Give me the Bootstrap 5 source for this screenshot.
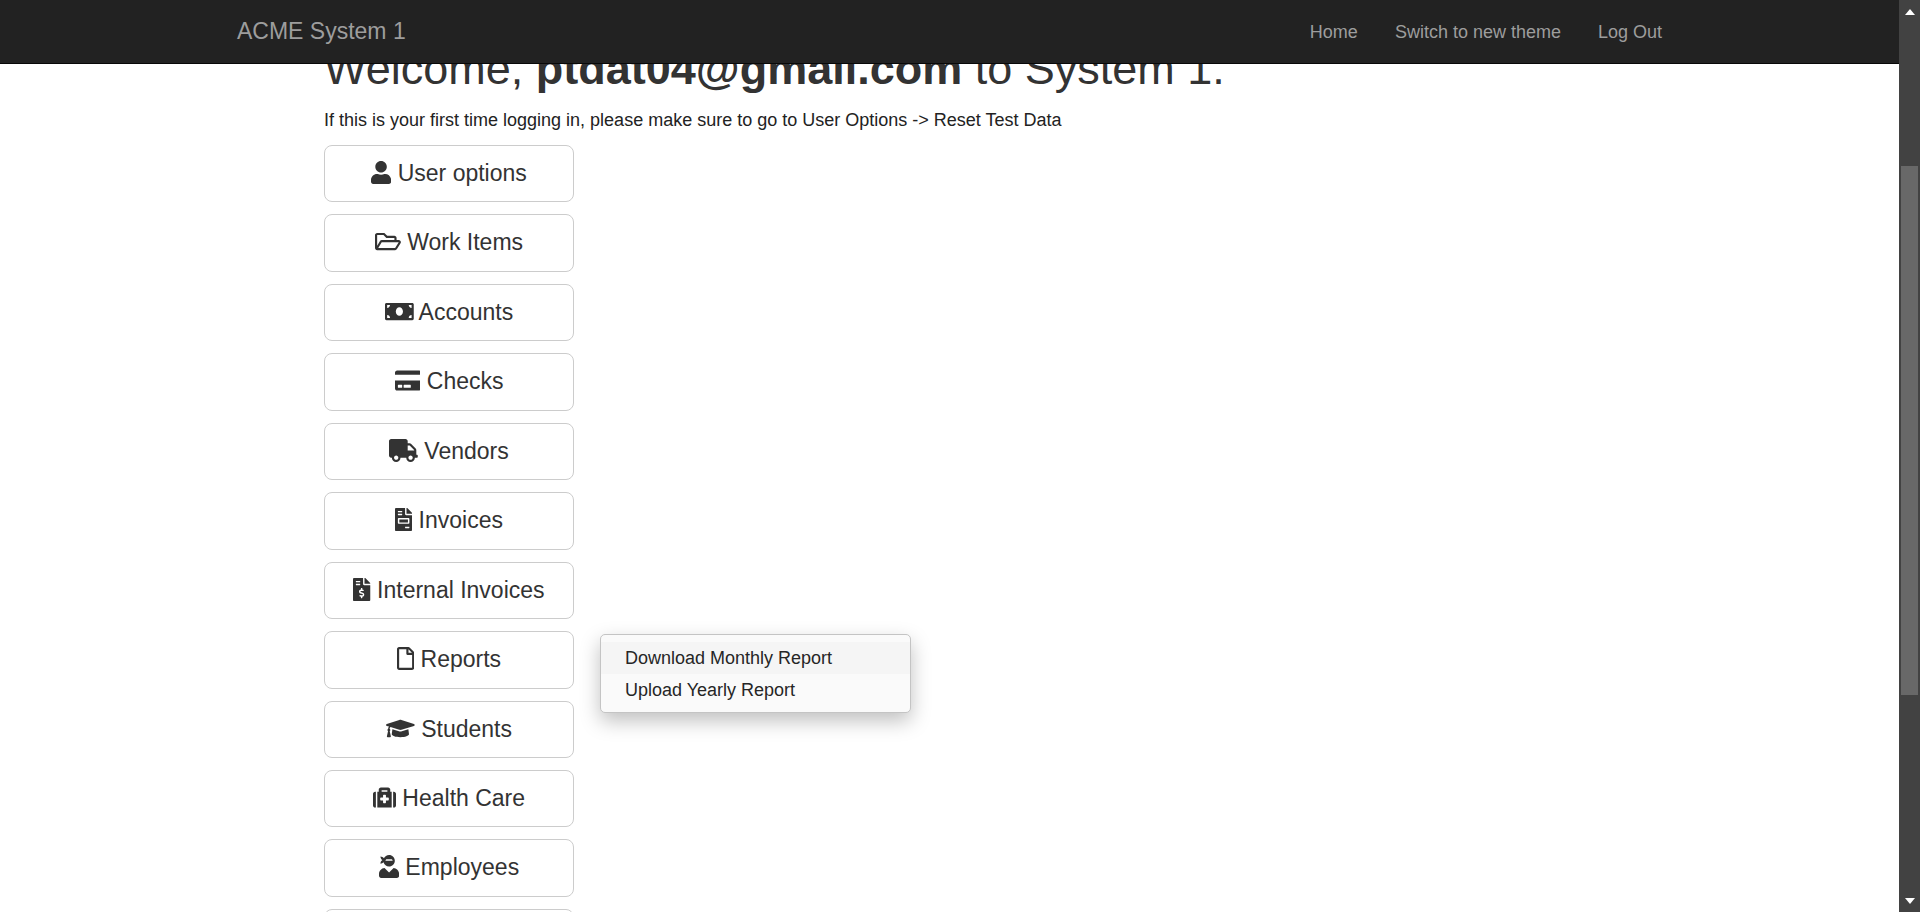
<!DOCTYPE html>
<html lang="en">
<head>
<meta charset="utf-8">
<meta name="viewport" content="width=device-width, initial-scale=1">
<title>ACME System 1</title>
<link href="https://cdn.jsdelivr.net/npm/bootstrap@5.3.0/dist/css/bootstrap.min.css" rel="stylesheet">
<style>
  :root { --bar-width: 21px; }
  body {
    font-family: "Liberation Sans", Arial, sans-serif;
    font-size: 18px;
    line-height: 26px;
    color: #333;
  }
  .viewport { padding-right: var(--bar-width); }
  .page-width { max-width: 1463px; padding-left: 19px; padding-right: 19px; }

  /* Top bar */
  .top-bar {
    right: var(--bar-width);
    min-height: 64px;
    padding: 0;
    background: #222;
    border-bottom: 1px solid #080808;
  }
  .top-bar .navbar-brand { color: #9d9d9d; font-size: 23px; line-height: 26px; padding: 0 0 2px; }
  .top-bar .nav-link { color: #9d9d9d; padding: 0; }
  .top-links { gap: 37px; }

  /* Dashboard */
  .dashboard { padding-top: 44px; }
  .dashboard-body { padding-left: 87px; }
  .welcome { font-size: 45px; line-height: 50px; margin-bottom: 13px; color: #333; }
  .hint { margin-bottom: 12px; color: #222; }
  .tiles { gap: 12px; }
  .tile-item { width: 250px; }
  .tile {
    --bs-btn-padding-y: 13px;
    --bs-btn-padding-x: 0;
    --bs-btn-font-size: 23px;
    --bs-btn-line-height: 1.28;
    --bs-btn-color: #333;
    --bs-btn-bg: #fff;
    --bs-btn-border-color: #ccc;
    --bs-btn-border-radius: 8px;
    --bs-btn-hover-color: #333;
    --bs-btn-hover-bg: #e6e6e6;
    --bs-btn-hover-border-color: #adadad;
  }
  .tile svg { height: 23px; width: auto; fill: currentColor; vertical-align: -3px; }

  .report-menu {
    left: 276px;
    top: 3px;
    width: 311px;
    padding: 7px 0 6px;
    font-size: 18px;
    background: #fafafa;
    border: 1px solid #c4c4c4;
    border-radius: 5px;
    box-shadow: 0 8px 20px rgba(0, 0, 0, .25);
  }
  .report-menu .dropdown-item { padding: 3px 24px; line-height: 26px; color: #262626; }
  .report-menu .dropdown-item.current { background: #f5f5f5; }

  /* Window scroll bar */
  .scroll-track { width: var(--bar-width); background: #424242; z-index: 1040; padding: 9px 2px 8px; }
  .scroll-track svg { width: 10px; height: 6px; fill: #fff; }
  .scroll-space { flex: 151 0 0; }
  .scroll-thumb { flex: 529 0 0; background: #686868; }
  .scroll-rest { flex: 203 0 0; }
</style>
</head>
<body class="vh-100 overflow-hidden">
<nav class="navbar fixed-top top-bar">
  <div class="container-fluid page-width">
    <a class="navbar-brand" href="#">ACME System 1</a>
    <ul class="navbar-nav flex-row top-links">
      <li class="nav-item"><a class="nav-link" href="#">Home</a></li>
      <li class="nav-item"><a class="nav-link" href="#">Switch to new theme</a></li>
      <li class="nav-item"><a class="nav-link" href="#">Log Out</a></li>
    </ul>
  </div>
</nav>

<div class="viewport vh-100 overflow-hidden">
  <main class="container-fluid page-width dashboard">
    <div class="dashboard-body">
      <h1 class="welcome fw-normal">Welcome, <b class="fw-bold">ptdat04@gmail.com</b> to System 1.</h1>
      <p class="hint">If this is your first time logging in, please make sure to go to User Options -&gt; Reset Test Data</p>
      <div class="tiles d-flex flex-column">
        <div class="tile-item"><button type="button" class="btn tile w-100"><svg viewBox="0 0 448 512" aria-hidden="true"><path d="M224 256c70.7 0 128-57.3 128-128S294.7 0 224 0 96 57.3 96 128s57.3 128 128 128zm89.6 32h-16.7c-22.2 10.2-46.9 16-72.9 16s-50.6-5.8-72.9-16h-16.7C60.2 288 0 348.2 0 422.4V464c0 26.5 21.5 48 48 48h352c26.5 0 48-21.5 48-48v-41.6c0-74.2-60.2-134.4-134.4-134.4z"/></svg> User options</button></div>
        <div class="tile-item"><button type="button" class="btn tile w-100"><svg viewBox="0 0 576 512" aria-hidden="true"><path d="M527.9 224H480v-48c0-26.5-21.5-48-48-48H272l-64-64H48C21.5 64 0 85.5 0 112v288c0 26.5 21.5 48 48 48h400c16.5 0 31.9-8.5 40.7-22.6l79.9-128c20-31.9-3-73.4-40.7-73.4zM48 118c0-3.3 2.7-6 6-6h134.1l64 64H426c3.3 0 6 2.7 6 6v42H152c-16.8 0-32.4 8.8-41.1 23.2L48 351.4zm400 282H72l77.2-128H528z"/></svg> Work Items</button></div>
        <div class="tile-item"><button type="button" class="btn tile w-100"><svg viewBox="0 0 640 512" aria-hidden="true"><path d="M608 64H32C14.33 64 0 78.33 0 96v320c0 17.67 14.33 32 32 32h576c17.67 0 32-14.33 32-32V96c0-17.67-14.33-32-32-32zM48 400v-64c35.35 0 64 28.65 64 64H48zm0-224v-64h64c0 35.35-28.65 64-64 64zm272 176c-44.19 0-80-42.99-80-96 0-53.02 35.82-96 80-96s80 42.98 80 96c0 53.03-35.83 96-80 96zm272 48h-64c0-35.35 28.65-64 64-64v64zm0-224c-35.35 0-64-28.65-64-64h64v64z"/></svg> Accounts</button></div>
        <div class="tile-item"><button type="button" class="btn tile w-100"><svg viewBox="0 0 576 512" aria-hidden="true"><path d="M0 432c0 26.5 21.5 48 48 48h480c26.5 0 48-21.5 48-48V256H0v176zm192-68c0-6.6 5.4-12 12-12h136c6.6 0 12 5.4 12 12v40c0 6.6-5.4 12-12 12H204c-6.6 0-12-5.4-12-12v-40zm-128 0c0-6.6 5.4-12 12-12h72c6.6 0 12 5.4 12 12v40c0 6.6-5.4 12-12 12H76c-6.6 0-12-5.4-12-12v-40zM576 80v48H0V80c0-26.5 21.5-48 48-48h480c26.5 0 48 21.5 48 48z"/></svg> Checks</button></div>
        <div class="tile-item"><button type="button" class="btn tile w-100"><svg viewBox="0 0 640 512" aria-hidden="true"><path d="M624 352h-16V243.9c0-12.7-5.1-24.9-14.1-33.9L494 110.1c-9-9-21.2-14.1-33.9-14.1H416V48c0-26.5-21.5-48-48-48H48C21.5 0 0 21.5 0 48v320c0 26.5 21.5 48 48 48h16c0 53 43 96 96 96s96-43 96-96h128c0 53 43 96 96 96s96-43 96-96h48c8.8 0 16-7.2 16-16v-32c0-8.8-7.2-16-16-16zM160 464c-26.5 0-48-21.5-48-48s21.5-48 48-48 48 21.5 48 48-21.5 48-48 48zm320 0c-26.5 0-48-21.5-48-48s21.5-48 48-48 48 21.5 48 48-21.5 48-48 48zm80-208H416V144h44.1l99.9 99.9V256z"/></svg> Vendors</button></div>
        <div class="tile-item"><button type="button" class="btn tile w-100"><svg viewBox="0 0 384 512" aria-hidden="true"><path d="M288 256H96v64h192v-64zm89-151L279.1 7c-4.5-4.5-10.6-7-17-7H256v128h128v-6.1c0-6.3-2.5-12.4-7-16.9zm-153 31V0H24C10.7 0 0 10.7 0 24v464c0 13.3 10.7 24 24 24h336c13.3 0 24-10.7 24-24V160H248c-13.2 0-24-10.8-24-24zM64 72c0-4.42 3.58-8 8-8h80c4.42 0 8 3.58 8 8v16c0 4.42-3.58 8-8 8H72c-4.42 0-8-3.58-8-8V72zm0 64c0-4.42 3.58-8 8-8h80c4.42 0 8 3.58 8 8v16c0 4.42-3.58 8-8 8H72c-4.42 0-8-3.58-8-8v-16zm256 304c0 4.42-3.58 8-8 8h-80c-4.42 0-8-3.58-8-8v-16c0-4.42 3.58-8 8-8h80c4.42 0 8 3.58 8 8v16zm0-200v96c0 8.84-7.16 16-16 16H80c-8.84 0-16-7.16-16-16v-96c0-8.84 7.16-16 16-16h224c8.84 0 16 7.16 16 16z"/></svg> Invoices</button></div>
        <div class="tile-item"><button type="button" class="btn tile w-100"><svg viewBox="0 0 384 512" aria-hidden="true"><path d="M377 105L279.1 7c-4.5-4.5-10.6-7-17-7H256v128h128v-6.1c0-6.3-2.5-12.4-7-16.9zm-153 31V0H24C10.7 0 0 10.7 0 24v464c0 13.3 10.7 24 24 24h336c13.3 0 24-10.7 24-24V160H248c-13.2 0-24-10.8-24-24zM64 72c0-4.42 3.58-8 8-8h80c4.42 0 8 3.58 8 8v16c0 4.42-3.58 8-8 8H72c-4.42 0-8-3.58-8-8V72zm0 80v-16c0-4.42 3.58-8 8-8h80c4.42 0 8 3.58 8 8v16c0 4.42-3.58 8-8 8H72c-4.42 0-8-3.58-8-8zm144 263.88V440c0 4.42-3.58 8-8 8h-16c-4.42 0-8-3.58-8-8v-24.29c-11.29-.58-22.27-4.52-31.37-11.35-3.9-2.93-4.1-8.77-.57-12.14l11.75-11.21c2.77-2.64 6.89-2.76 10.13-.73 3.87 2.42 8.26 3.72 12.82 3.72h28.11c6.5 0 11.8-5.92 11.8-13.19 0-5.95-3.61-11.19-8.77-12.73l-45-13.5c-18.59-5.58-31.58-23.42-31.58-43.39 0-24.52 19.05-44.44 42.67-45.07V232c0-4.42 3.58-8 8-8h16c4.42 0 8 3.58 8 8v24.29c11.29.58 22.27 4.51 31.37 11.35 3.9 2.93 4.1 8.77.57 12.14l-11.75 11.21c-2.77 2.64-6.89 2.76-10.13.73-3.87-2.43-8.26-3.72-12.82-3.72h-28.11c-6.5 0-11.8 5.92-11.8 13.19 0 5.95 3.61 11.19 8.77 12.73l45 13.5c18.59 5.58 31.58 23.42 31.58 43.39 0 24.53-19.05 44.44-42.67 45.07z"/></svg> Internal Invoices</button></div>
        <div class="tile-item position-relative">
          <button type="button" class="btn tile w-100" aria-expanded="true"><svg viewBox="0 0 384 512" aria-hidden="true"><path d="M369.9 97.9L286 14C277 5 264.8-.1 252.1-.1H48C21.5 0 0 21.5 0 48v416c0 26.5 21.5 48 48 48h288c26.5 0 48-21.5 48-48V131.9c0-12.7-5.1-25-14.1-34zM332.1 128H256V51.9l76.1 76.1zM48 464V48h160v104c0 13.3 10.7 24 24 24h104v288H48z"/></svg> Reports</button>
          <ul class="dropdown-menu show report-menu">
            <li><a class="dropdown-item current" href="#">Download Monthly Report</a></li>
            <li><a class="dropdown-item" href="#">Upload Yearly Report</a></li>
          </ul>
        </div>
        <div class="tile-item"><button type="button" class="btn tile w-100"><svg viewBox="0 0 640 512" aria-hidden="true"><path d="M622.34 153.2L343.4 67.5c-15.2-4.67-31.6-4.67-46.79 0L17.66 153.2c-23.54 7.23-23.54 38.36 0 45.59l48.63 14.94c-10.67 13.19-17.23 29.28-17.88 46.9C38.78 266.15 32 276.11 32 288c0 10.78 5.68 19.85 13.86 25.65L20.33 428.53C18.11 438.52 25.71 448 35.94 448h56.11c10.24 0 17.84-9.48 15.62-19.47L82.14 313.65C90.32 307.85 96 298.78 96 288c0-11.57-6.47-21.25-15.66-26.87.76-15.02 8.44-28.3 20.69-36.72L296.6 284.5c9.06 2.78 26.44 6.25 46.79 0l278.95-85.7c23.55-7.24 23.55-38.36 0-45.6zM352.79 315.09c-28.53 8.76-52.84 3.92-65.59 0l-145.02-44.55L128 384c0 35.35 85.96 64 192 64s192-28.65 192-64l-14.18-113.47-145.03 44.56z"/></svg> Students</button></div>
        <div class="tile-item"><button type="button" class="btn tile w-100"><svg viewBox="0 0 512 512" aria-hidden="true"><path d="M96 480h320V128h-32V80c0-26.51-21.49-48-48-48H176c-26.51 0-48 21.49-48 48v48H96v352zm96-384h128v32H192V96zm320 80v256c0 26.51-21.49 48-48 48h-16V128h16c26.51 0 48 21.49 48 48zM64 480H48c-26.51 0-48-21.49-48-48V176c0-26.51 21.49-48 48-48h16v352zm288-208v32c0 8.837-7.163 16-16 16h-48v48c0 8.837-7.163 16-16 16h-32c-8.837 0-16-7.163-16-16v-48h-48c-8.837 0-16-7.163-16-16v-32c0-8.837 7.163-16 16-16h48v-48c0-8.837 7.163-16 16-16h32c8.837 0 16 7.163 16 16v48h48c8.837 0 16 7.163 16 16z"/></svg> Health Care</button></div>
        <div class="tile-item"><button type="button" class="btn tile w-100"><svg viewBox="0 0 448 512" aria-hidden="true"><path d="M325.4 289.2L224 390.6 122.6 289.2C54 295.3 0 352.2 0 422.4V464c0 26.5 21.5 48 48 48h352c26.5 0 48-21.5 48-48v-41.6c0-70.2-54-127.1-122.6-133.2zM32 192c27.3 0 51.8-11.5 69.2-29.7 15.1 53.9 64 93.7 122.8 93.7 70.7 0 128-57.3 128-128S294.7 0 224 0c-50.4 0-93.6 29.4-114.5 71.8C92.1 47.8 64 32 32 32c0 33.4 17.1 62.8 43.1 80-26 17.2-43.1 46.6-43.1 80zm144-96h96c17.7 0 32 14.3 32 32H144c0-17.7 14.3-32 32-32z"/></svg> Employees</button></div>
        <div class="tile-item"><button type="button" class="btn tile w-100">&nbsp;</button></div>
      </div>
    </div>
  </main>
</div>

<div class="scroll-track position-fixed top-0 end-0 vh-100 d-flex flex-column" aria-hidden="true">
  <svg class="mx-auto flex-shrink-0" viewBox="0 0 10 6"><path d="M5 0l5 6H0z"/></svg>
  <div class="scroll-space"></div>
  <div class="scroll-thumb"></div>
  <div class="scroll-rest"></div>
  <svg class="mx-auto flex-shrink-0" viewBox="0 0 10 6"><path d="M5 6L0 0h10z"/></svg>
</div>
<script src="https://cdn.jsdelivr.net/npm/bootstrap@5.3.0/dist/js/bootstrap.bundle.min.js"></script>
</body>
</html>
